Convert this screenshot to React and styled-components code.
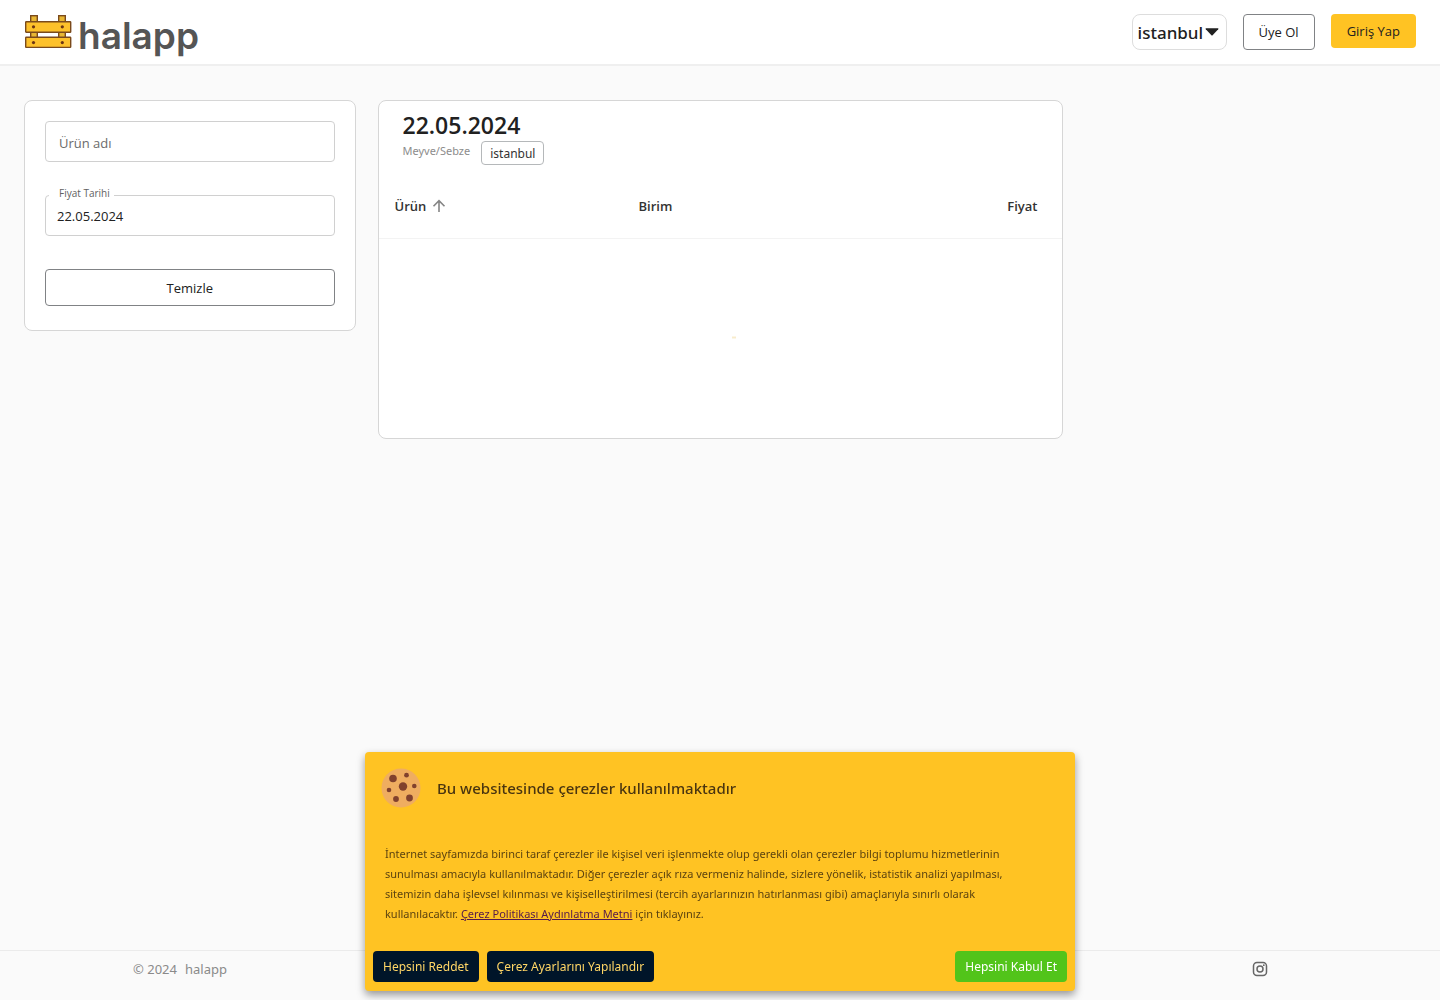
import styled, { createGlobalStyle } from 'styled-components'

const GlobalStyle = createGlobalStyle`
    * {
        box-sizing: border-box;
    }
    body {
        margin: 0;
        background-color: #fafafa;
        color: #212121;
        font-family: 'Open Sans', 'Noto Sans', sans-serif;
        font-size: 13px;
    }
    button, input, select {
        font-family: inherit;
        color: inherit;
    }
`
const Page = styled.div`
    min-height: 100vh;
    display: flex;
    flex-direction: column;
`
const Header = styled.header`
    height: 66px;
    padding: 0 24px;
    display: flex;
    align-items: flex-start;
    justify-content: space-between;
    background-color: white;
    border-bottom: 2px solid #efefef;
`
const Logo = styled.a`
    display: flex;
    align-items: flex-start;
    gap: 6px;
    padding-top: 14px;
    color: #555555;
    text-decoration: none;
`
const LogoText = styled.span`
    font-family: Inter, sans-serif;
    font-size: 37px;
    font-weight: 600;
    line-height: 44px;
`
const HeaderActions = styled.div`
    display: flex;
    align-items: flex-start;
    gap: 16px;
    padding-top: 14px;
`
const CityPicker = styled.label`
    display: flex;
    align-items: center;
    width: 95px;
    height: 36px;
    padding: 0 7px 0 5px;
    border: 1px solid #dddddd;
    border-radius: 8px;
    background-color: white;
`
const CitySelect = styled.select`
    flex: 1;
    min-width: 0;
    padding: 0;
    border: none;
    background: none;
    appearance: none;
    font-family: 'Noto Sans', sans-serif;
    font-size: 17px;
    font-weight: 500;
`
const Button = styled.button`
    height: ${({ $filled, $block }) => ($filled ? '34px' : $block ? '37px' : '36px')};
    width: ${({ $block }) => ($block ? '100%' : 'auto')};
    padding: 0 ${({ $filled }) => ($filled ? '16px' : '15px')};
    border: ${({ $filled }) => ($filled ? 'none' : '1px solid #808285')};
    border-radius: 4px;
    background-color: ${({ $filled }) => ($filled ? '#ffc323' : 'white')};
    font-size: 13px;
    cursor: pointer;
`
const Main = styled.main`
    flex: 1;
    display: grid;
    grid-template-columns: repeat(12, 1fr);
    align-items: start;
    gap: 22px;
    padding: 34px 24px;
`
const Card = styled.section`
    grid-column: span ${({ $span }) => $span};
    border: 1px solid #d6d6d6;
    border-radius: 8px;
    background-color: white;
`
const Filters = styled.form`
    display: flex;
    flex-direction: column;
    gap: 33px;
    padding: 20px 20px 24px;
`
const SearchInput = styled.input`
    width: 100%;
    height: 41px;
    padding: 2px 13px 0;
    border: 1px solid #d0d0d0;
    border-radius: 4px;
    background-color: white;
    font-size: 13px;
    &::placeholder {
        color: #6b6b6b;
        opacity: 1;
    }
`
const DateField = styled.fieldset`
    min-width: 0;
    height: 49px;
    margin: -8px 0 0;
    padding: 0 3px;
    border: 1px solid #d0d0d0;
    border-radius: 4px;
`
const DateLegend = styled.legend`
    padding: 0 4px 5px 10px;
    font-size: 10px;
    line-height: 12px;
    color: #616161;
`
const DateInput = styled.input`
    display: block;
    width: 100%;
    height: 24px;
    padding: 0 8px;
    border: none;
    background: none;
    font-size: 13px;
`
const CardHead = styled.div`
    padding: 8px 24px 9px;
`
const DateTitle = styled.h1`
    margin: 0;
    font-size: 23px;
    font-weight: 600;
    line-height: 32px;
`
const SubTitle = styled.div`
    display: flex;
    align-items: flex-start;
    gap: 11px;
    font-family: 'Noto Sans', sans-serif;
    font-size: 11px;
    line-height: 20px;
    color: #8c8c8c;
`
const Tag = styled.span`
    height: 24px;
    padding: 0 8px;
    border: 1px solid #b5b8ba;
    border-radius: 4px;
    font-size: 12px;
    line-height: 23px;
    color: #333333;
`
const PriceTable = styled.table`
    width: 100%;
    border-collapse: collapse;
    table-layout: fixed;
`
const HeadCell = styled.th`
    width: ${({ $width }) => $width};
    height: 64px;
    padding: 0 24px 0 16px;
    border-bottom: 1px solid #f3f3f3;
    text-align: ${({ $align }) => $align || 'left'};
    font-size: 13px;
    font-weight: 600;
    color: #333333;
`
const SortLabel = styled.span`
    display: inline-flex;
    align-items: center;
    gap: 6px;
`
const LoadingCell = styled.td`
    height: 200px;
    padding: 0;
    text-align: center;
    vertical-align: middle;
`
const Spinner = styled.svg`
    display: inline-block;
    vertical-align: middle;
`
const Footer = styled.footer`
    display: grid;
    grid-template-columns: repeat(4, 1fr);
    height: 50px;
    padding-top: 8px;
    border-top: 1px solid #ebebeb;
    color: #8a8a8a;
`
const FooterCell = styled.div`
    grid-column: ${({ $column }) => $column};
    display: flex;
    align-items: center;
    justify-content: center;
    gap: 8px;
    height: 20px;
    font-family: 'Noto Sans', sans-serif;
`
const FooterLink = styled.a`
    display: flex;
    color: #666666;
`
const CookieBox = styled.div`
    position: fixed;
    bottom: 9px;
    left: 50%;
    transform: translateX(-50%);
    width: 710px;
    max-width: 100%;
    padding: 16px 8px 9px;
    border-radius: 4px;
    background-color: #ffc323;
    box-shadow: 0 4px 8px rgba(0, 0, 0, 0.4);
    font-family: 'Noto Sans', sans-serif;
`
const CookieHead = styled.div`
    display: flex;
    align-items: center;
    gap: 16px;
    padding: 0 8px;
`
const CookieTitle = styled.h2`
    margin: 0;
    font-size: 15px;
    font-weight: 500;
    line-height: 20px;
    color: #4a3510;
`
const CookieText = styled.p`
    margin: 36px 12px 27px;
    max-width: 640px;
    font-size: 11px;
    line-height: 20px;
    color: #5c4310;
    a {
        color: #551a4b;
    }
`
const CookieActions = styled.div`
    display: flex;
    gap: 8px;
`
const CookieButton = styled.button`
    height: 31px;
    padding: 0 10px;
    border: none;
    border-radius: 4px;
    margin-left: ${({ $accept }) => ($accept ? 'auto' : '0')};
    background-color: ${({ $accept }) => ($accept ? '#52c41a' : '#001529')};
    color: ${({ $accept }) => ($accept ? 'white' : '#ffd666')};
    font-size: 12px;
    cursor: pointer;
`

function CrateIcon() {
    return (
        <svg width="48" height="35" viewBox="0 0 48 35" aria-hidden="true">
            <g fill="#fdc12b" stroke="#7a4a1c" strokeWidth="1.4">
                <rect x="6.7" y="1.7" width="6.6" height="30" fill="#e8b733" />
                <rect x="34.7" y="1.7" width="6.6" height="30" fill="#e8b733" />
                <rect x="1.7" y="7.7" width="45" height="10.6" rx="0.6" />
                <rect x="1.7" y="23.2" width="45" height="10.2" rx="0.6" />
            </g>
            <g fill="#6b3414">
                <circle cx="9.5" cy="12.8" r="1.6" />
                <circle cx="38.3" cy="12.8" r="1.6" />
                <circle cx="9.5" cy="28.6" r="1.6" />
                <circle cx="38.3" cy="28.6" r="1.6" />
            </g>
        </svg>
    )
}

function CookieIcon() {
    return (
        <svg width="40" height="40" viewBox="0 0 40 40" aria-hidden="true">
            <circle cx="20" cy="20" r="19.5" fill="#efad60" />
            <g fill="#81412d">
                <circle cx="12" cy="10.5" r="3.8" />
                <circle cx="25.5" cy="7.2" r="2.4" />
                <circle cx="22" cy="18.5" r="4.2" />
                <circle cx="33.3" cy="18" r="2.3" />
                <circle cx="8" cy="22" r="2.3" />
                <circle cx="15" cy="31" r="2.9" />
                <circle cx="28.5" cy="30" r="3.4" />
            </g>
        </svg>
    )
}

function InstagramIcon() {
    return (
        <svg width="16" height="16" viewBox="0 0 16 16" fill="none" stroke="currentColor" strokeWidth="1.5" aria-hidden="true">
            <rect x="1.5" y="1.5" width="13" height="13" rx="3.5" />
            <circle cx="8" cy="8" r="3" />
            <circle cx="11.8" cy="4.2" r="0.9" fill="currentColor" stroke="none" />
        </svg>
    )
}

function TopBar() {
    return (
        <Header>
            <Logo href="#">
                <CrateIcon />
                <LogoText>halapp</LogoText>
            </Logo>
            <HeaderActions>
                <CityPicker>
                    <CitySelect aria-label="Şehir" defaultValue="istanbul">
                        <option value="istanbul">istanbul</option>
                    </CitySelect>
                    <svg width="14" height="8" viewBox="0 0 14 8" aria-hidden="true">
                        <path d="M1 0.3H13Q13.8 0.5 13.2 1.2L7.6 7.2Q7 7.8 6.4 7.2L0.8 1.2Q0.2 0.5 1 0.3Z" fill="#212121" />
                    </svg>
                </CityPicker>
                <Button type="button">Üye Ol</Button>
                <Button type="button" $filled>Giriş Yap</Button>
            </HeaderActions>
        </Header>
    )
}

function FilterCard() {
    return (
        <Card $span={3}>
            <Filters>
                <SearchInput type="text" aria-label="Ürün adı" placeholder="Ürün adı" />
                <DateField>
                    <DateLegend>
                        <label htmlFor="price-date">Fiyat Tarihi</label>
                    </DateLegend>
                    <DateInput id="price-date" type="text" defaultValue="22.05.2024" />
                </DateField>
                <Button type="reset" $block>Temizle</Button>
            </Filters>
        </Card>
    )
}

function PriceCard() {
    return (
        <Card $span={6}>
            <CardHead>
                <DateTitle>22.05.2024</DateTitle>
                <SubTitle>
                    <span>Meyve/Sebze</span>
                    <Tag>istanbul</Tag>
                </SubTitle>
            </CardHead>
            <PriceTable>
                <thead>
                    <tr>
                        <HeadCell $width="244px">
                            <SortLabel>
                                Ürün
                                <svg width="14" height="14" viewBox="0 0 14 14" fill="none" stroke="#858585" strokeWidth="1.6" aria-hidden="true">
                                    <path d="M7 13V1.8M1.5 7.2L7 1.7L12.5 7.2" />
                                </svg>
                            </SortLabel>
                        </HeadCell>
                        <HeadCell>Birim</HeadCell>
                        <HeadCell $align="right">Fiyat</HeadCell>
                    </tr>
                </thead>
                <tbody>
                    <tr>
                        <LoadingCell colSpan={3}>
                            <Spinner width="32" height="32" viewBox="0 0 32 32" role="progressbar" aria-label="Yükleniyor">
                                <path d="M28 15.5H32" stroke="#f8eccd" strokeWidth="2" />
                            </Spinner>
                        </LoadingCell>
                    </tr>
                </tbody>
            </PriceTable>
        </Card>
    )
}

function CookieNotice() {
    return (
        <CookieBox role="dialog" aria-labelledby="cookie-title">
            <CookieHead>
                <CookieIcon />
                <CookieTitle id="cookie-title">Bu websitesinde çerezler kullanılmaktadır</CookieTitle>
            </CookieHead>
            <CookieText>
                İnternet sayfamızda birinci taraf çerezler ile kişisel veri işlenmekte olup gerekli olan çerezler bilgi
                toplumu hizmetlerinin sunulması amacıyla kullanılmaktadır. Diğer çerezler açık rıza vermeniz halinde,
                sizlere yönelik, istatistik analizi yapılması, sitemizin daha işlevsel kılınması ve
                kişiselleştirilmesi (tercih ayarlarınızın hatırlanması gibi) amaçlarıyla sınırlı olarak
                kullanılacaktır. <a href="#">Çerez Politikası Aydınlatma Metni</a> için tıklayınız.
            </CookieText>
            <CookieActions>
                <CookieButton type="button">Hepsini Reddet</CookieButton>
                <CookieButton type="button">Çerez Ayarlarını Yapılandır</CookieButton>
                <CookieButton type="button" $accept>Hepsini Kabul Et</CookieButton>
            </CookieActions>
        </CookieBox>
    )
}

function App() {
    return (
        <Page>
            <GlobalStyle />
            <TopBar />
            <Main>
                <FilterCard />
                <PriceCard />
            </Main>
            <Footer>
                <FooterCell $column={1}>
                    <span>© 2024</span>
                    <span>halapp</span>
                </FooterCell>
                <FooterCell $column={4}>
                    <FooterLink href="#" aria-label="Instagram">
                        <InstagramIcon />
                    </FooterLink>
                </FooterCell>
            </Footer>
            <CookieNotice />
        </Page>
    )
}

export default App
